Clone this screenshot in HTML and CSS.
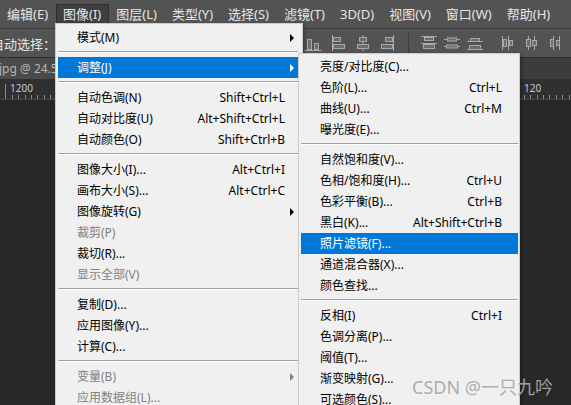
FILE: index.html
```html
<!DOCTYPE html>
<html lang="zh-CN">
<head>
<meta charset="utf-8">
<title>Photoshop 图像菜单</title>
<link rel="stylesheet" href="styles.css">
</head>
<body>
<div class="app">
  <div class="menubar">
    <span class="mb-item">编辑(E)</span>
    <span class="mb-item active">图像(I)</span>
    <span class="mb-item">图层(L)</span>
    <span class="mb-item">类型(Y)</span>
    <span class="mb-item">选择(S)</span>
    <span class="mb-item">滤镜(T)</span>
    <span class="mb-item">3D(D)</span>
    <span class="mb-item">视图(V)</span>
    <span class="mb-item">窗口(W)</span>
    <span class="mb-item">帮助(H)</span>
  </div>

  <div class="options">
    <span class="opt-label">自动选择：</span>
    <div class="align-icons">
      <svg class="ico ico-a" width="20" height="16" viewBox="0 0 20 16"><path d="M1.5 15.5h17" class="ln"/><rect x="4.5" y="4.5" width="4" height="10" class="bx"/><rect x="11.5" y="8.5" width="4" height="6" class="bx"/></svg>
      <svg class="ico ico-b" width="16" height="16" viewBox="0 0 16 16"><path d="M1.5 0v16" class="ln"/><rect x="2.5" y="2.5" width="7" height="4" class="bx"/><rect x="2.5" y="9.5" width="11" height="4" class="bx"/></svg>
      <svg class="ico ico-c" width="16" height="16" viewBox="0 0 16 16"><path d="M8 0v16" class="ln"/><rect x="4.5" y="2.5" width="7" height="4" class="bx"/><rect x="2.5" y="9.5" width="11" height="4" class="bx"/></svg>
      <svg class="ico ico-c" width="16" height="16" viewBox="0 0 16 16"><path d="M14.5 0v16" class="ln"/><rect x="6.5" y="2.5" width="7" height="4" class="bx"/><rect x="2.5" y="9.5" width="11" height="4" class="bx"/></svg>
      <span class="divider"></span>
      <svg class="ico" width="18" height="16" viewBox="0 0 18 16"><path d="M1 1.5h16M1 8.5h16" class="ln"/><rect x="4.5" y="2.5" width="9" height="3" class="bx"/><rect x="3.5" y="9.5" width="11" height="4" class="bx"/></svg>
      <svg class="ico ico-e" width="18" height="16" viewBox="0 0 18 16"><path d="M1 4.5h16M1 11.5h16" class="ln"/><rect x="4.5" y="3" width="9" height="3" class="bx"/><rect x="3.5" y="10" width="11" height="3" class="bx"/></svg>
      <svg class="ico ico-e" width="18" height="16" viewBox="0 0 18 16"><path d="M1 6.5h16M1 14.5h16" class="ln"/><rect x="4.5" y="3.5" width="9" height="3" class="bx"/><rect x="3.5" y="10.5" width="11" height="4" class="bx"/></svg>
      <svg class="ico ico-h" width="14" height="16" viewBox="0 0 14 16"><path d="M2.5 1v14M8.5 1v14" class="ln"/><rect x="3.5" y="4.5" width="3" height="7" class="bx"/><rect x="9.5" y="5.5" width="3" height="5" class="bx"/></svg>
      <svg class="ico ico-i" width="14" height="16" viewBox="0 0 14 16"><path d="M4.5 1v14M10.5 1v14" class="ln"/><rect x="2.5" y="4.5" width="4" height="7" class="bx"/><rect x="8.5" y="5.5" width="4" height="5" class="bx"/></svg>
      <svg class="ico ico-i" width="14" height="16" viewBox="0 0 14 16"><path d="M5.5 1v14M11.5 1v14" class="ln"/><rect x="2.5" y="4.5" width="3" height="7" class="bx"/><rect x="8.5" y="5.5" width="3" height="5" class="bx"/></svg>
    </div>
  </div>

  <div class="tabs">
    <span class="tab">jpg @ 24.5%</span>
  </div>

  <div class="ruler">
    <span class="r-label r-left">1200</span>
    <span class="r-label r-right">120</span>
  </div>

  <div class="canvas"></div>

  <div class="menu main-menu">
    <div class="item sub">模式(M)</div>
    <div class="sep"></div>
    <div class="item sub hl">调整(J)</div>
    <div class="sep"></div>
    <div class="item"><span>自动色调(N)</span><span class="key">Shift+Ctrl+L</span></div>
    <div class="item"><span>自动对比度(U)</span><span class="key">Alt+Shift+Ctrl+L</span></div>
    <div class="item"><span>自动颜色(O)</span><span class="key">Shift+Ctrl+B</span></div>
    <div class="sep"></div>
    <div class="item"><span>图像大小(I)...</span><span class="key">Alt+Ctrl+I</span></div>
    <div class="item"><span>画布大小(S)...</span><span class="key">Alt+Ctrl+C</span></div>
    <div class="item sub">图像旋转(G)</div>
    <div class="item dis">裁剪(P)</div>
    <div class="item">裁切(R)...</div>
    <div class="item dis">显示全部(V)</div>
    <div class="sep"></div>
    <div class="item">复制(D)...</div>
    <div class="item">应用图像(Y)...</div>
    <div class="item">计算(C)...</div>
    <div class="sep"></div>
    <div class="item dis sub">变量(B)</div>
    <div class="item dis">应用数据组(L)...</div>
  </div>

  <div class="menu sub-menu">
    <div class="item">亮度/对比度(C)...</div>
    <div class="item"><span>色阶(L)...</span><span class="key">Ctrl+L</span></div>
    <div class="item"><span>曲线(U)...</span><span class="key">Ctrl+M</span></div>
    <div class="item">曝光度(E)...</div>
    <div class="sep"></div>
    <div class="item">自然饱和度(V)...</div>
    <div class="item"><span>色相/饱和度(H)...</span><span class="key">Ctrl+U</span></div>
    <div class="item"><span>色彩平衡(B)...</span><span class="key">Ctrl+B</span></div>
    <div class="item"><span>黑白(K)...</span><span class="key">Alt+Shift+Ctrl+B</span></div>
    <div class="item hl">照片滤镜(F)...</div>
    <div class="item">通道混合器(X)...</div>
    <div class="item">颜色查找...</div>
    <div class="sep"></div>
    <div class="item"><span>反相(I)</span><span class="key">Ctrl+I</span></div>
    <div class="item">色调分离(P)...</div>
    <div class="item">阈值(T)...</div>
    <div class="item">渐变映射(G)...</div>
    <div class="item">可选颜色(S)...</div>
  </div>

  <div class="watermark">CSDN @一只九吟</div>
</div>
</body>
</html>
```

FILE: styles.css
```css
* { box-sizing: border-box; }

html, body {
  margin: 0;
  padding: 0;
}

body {
  width: 571px;
  height: 405px;
  overflow: hidden;
  background: #282828;
  font-family: "Noto Sans", "Noto Sans CJK SC", sans-serif;
}

.app {
  position: relative;
  width: 571px;
  height: 405px;
  overflow: hidden;
  display: flex;
  flex-direction: column;
}

/* ---------- menu bar ---------- */
.menubar {
  height: 28px;
  flex: none;
  background: #535353;
  display: flex;
  align-items: flex-start;
  padding-top: 4px;
  font-size: 13px;
  color: #e6e6e6;
}

.mb-item {
  height: 19px;
  line-height: 18px;
  padding: 0 7px 0 6px;
  border: 1px solid transparent;
  border-bottom: 0;
  white-space: nowrap;
}

.mb-item.active {
  background: #3f3f3f;
  border-color: #2e2e2e;
}

/* ---------- options bar ---------- */
.options {
  height: 29px;
  flex: none;
  background: #535353;
  border-top: 1px solid #3a3a3a;
  display: flex;
  align-items: center;
  font-size: 13px;
  color: #e6e6e6;
  white-space: nowrap;
}

.opt-label {
  margin-left: -9px;
}

.align-icons {
  display: flex;
  align-items: center;
  margin-left: 247px;
}

.ico { flex: none; display: block; }
.ico .ln { stroke: #a9a9a9; stroke-width: 1; fill: none; }
.ico .bx { stroke: #a9a9a9; stroke-width: 1; fill: #6c6c6c; }

.ico-b, .ico-c { margin-left: 8px; }
.ico-e { margin-left: 5px; }
.ico-h { margin-left: 16px; }
.ico-i { margin-left: 10px; }

.divider {
  width: 1px;
  height: 20px;
  background: #3c3c3c;
  margin: 0 11px 0 13px;
}

/* ---------- document tabs ---------- */
.tabs {
  height: 22px;
  flex: none;
  background: #3c3c3c;
  border-top: 1px solid #2c2c2c;
  display: flex;
  align-items: stretch;
}

.tab {
  background: #4a4a4a;
  color: #b4b4b4;
  font-size: 12px;
  line-height: 21px;
  padding: 0 10px 0 0;
  margin-left: -1px;
  white-space: nowrap;
}

/* ---------- ruler ---------- */
.ruler {
  position: relative;
  height: 21px;
  flex: none;
  background-color: #303030;
  border-bottom: 1px solid #454545;
  background-image:
    linear-gradient(#8a8a8a, #8a8a8a),
    repeating-linear-gradient(90deg, transparent 0, transparent 5.4px, #8a8a8a 5.4px, #8a8a8a 6.4px);
  background-size: 1px 15px, 100% 4px;
  background-position: 5px 5px, 0 100%;
  background-repeat: no-repeat, no-repeat;
}

.r-label {
  position: absolute;
  top: 3px;
  font-size: 10px;
  line-height: 12px;
  color: #c8c8c8;
  background: #303030;
  padding-right: 1px;
}

.r-left { left: 10px; }
.r-right { left: 524px; }

.canvas {
  flex: 1;
  background: #282828;
}

/* ---------- menus ---------- */
.menu {
  position: absolute;
  background: #f0f0f0;
  border: 1px solid #cccccc;
  font-size: 12px;
  color: #000;
  box-shadow: 2px 2px 3px rgba(0, 0, 0, 0.25);
}

.main-menu {
  left: 55px;
  top: 23px;
  width: 248px;
  padding: 3px 4px 0 2px;
  height: 420px;
}

.sub-menu {
  left: 298px;
  top: 53px;
  width: 222px;
  padding: 2px 1px 0 2px;
  height: 380px;
}

.item {
  position: relative;
  height: 21px;
  line-height: 21px;
  padding: 0 13px 0 19px;
  display: flex;
  justify-content: space-between;
  white-space: nowrap;
}

.sub-menu .item { padding-right: 16px; }

.item.dis { color: #808080; }

.item.hl {
  background: #0078d7;
  color: #fff;
}

.item.sub::after {
  content: "";
  position: absolute;
  right: 4px;
  top: 7px;
  border-left: 4px solid #000;
  border-top: 4px solid transparent;
  border-bottom: 4px solid transparent;
}

.item.sub.hl::after { border-left-color: #fff; }
.item.sub.dis::after { border-left-color: #808080; }

.sep {
  height: 9px;
  padding-top: 3px;
}

.sep::before {
  content: "";
  display: block;
  height: 1px;
  background: #a0a0a0;
  border-bottom: 1px solid #ffffff;
  box-sizing: content-box;
}

/* ---------- watermark ---------- */
.watermark {
  position: absolute;
  left: 412px;
  top: 375px;
  font-size: 18px;
  line-height: 24px;
  color: rgba(168, 168, 168, 0.95);
  white-space: nowrap;
}
```
